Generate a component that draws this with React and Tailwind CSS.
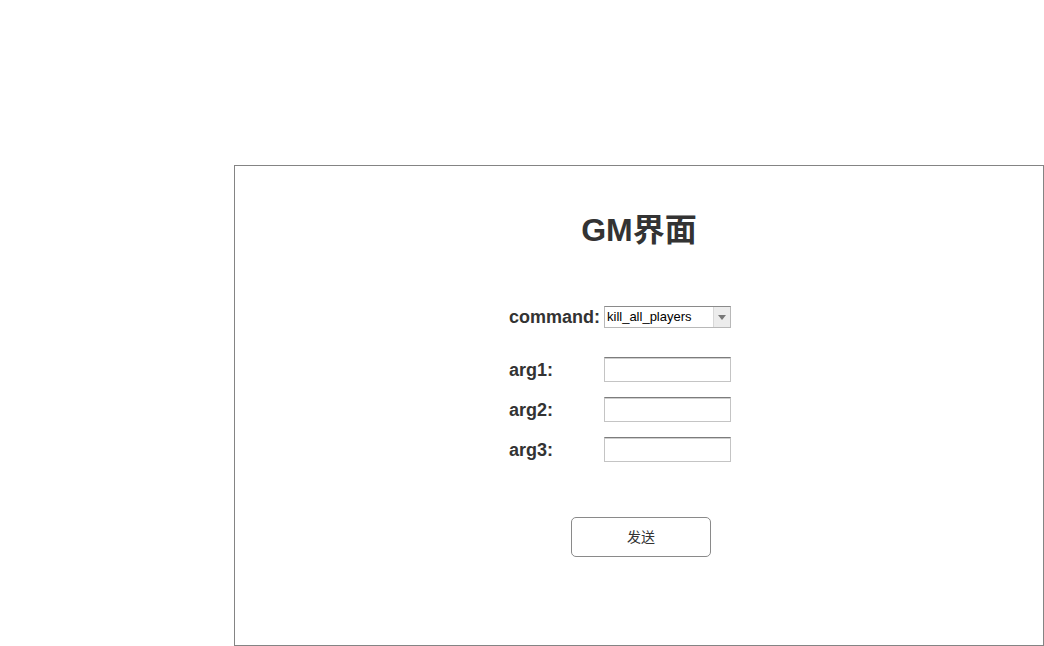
import React from "react";

const font = { fontFamily: '"Liberation Sans", Arial, "Noto Sans CJK SC", sans-serif' };

function Field({ label }) {
  return (
    <div className="flex items-center h-[25px]">
      <div className="w-[95px] text-[18px] leading-[20px] font-bold text-[#333]">{label}</div>
      <input
        type="text"
        className="w-[127px] h-[25px] bg-white border border-[#c4c4c4] border-t-[#7c7c7c] shadow-[inset_0_1px_0_#cfcfcf] outline-none px-1 text-[13px]"
      />
    </div>
  );
}

export default function App() {
  return (
    <div className="w-[1044px] h-[646px] bg-white overflow-hidden" style={font}>
      <div className="pt-[165px] pl-[234px]">
        <div className="w-[810px] h-[481px] border border-[#848484] bg-white">
          <h1 className="mt-[48px] text-center text-[32px] leading-[32px] font-bold text-[#333]">GM界面</h1>

          <div className="ml-[274px] mt-[60px] flex flex-col">
            <div className="flex items-center h-[22px]">
              <div className="w-[95px] text-[18px] leading-[20px] font-bold text-[#333]">command:</div>
              <div className="relative w-[127px] h-[22px] bg-white border border-[#b8b8b8] border-t-[#8a8a8a]">
                <div className="h-full flex items-center pl-[2px] text-[13px] text-black">kill_all_players</div>
                <div className="absolute right-0 top-0 w-[17px] h-full bg-[#ececec] border-l border-[#d8d8d8] flex items-center justify-center">
                  <svg width="8" height="5" viewBox="0 0 8 5">
                    <path d="M0 0 H8 L4 5 Z" fill="#777" />
                  </svg>
                </div>
              </div>
            </div>

            <div className="mt-[29px] flex flex-col gap-[15px]">
              <Field label="arg1:" />
              <Field label="arg2:" />
              <Field label="arg3:" />
            </div>
          </div>

          <button
            type="button"
            className="ml-[336px] mt-[55px] w-[140px] h-[40px] rounded-[5px] border border-[#8a8a8a] bg-white text-[14px] text-[#333]"
            style={font}
          >
            发送
          </button>
        </div>
      </div>
    </div>
  );
}
